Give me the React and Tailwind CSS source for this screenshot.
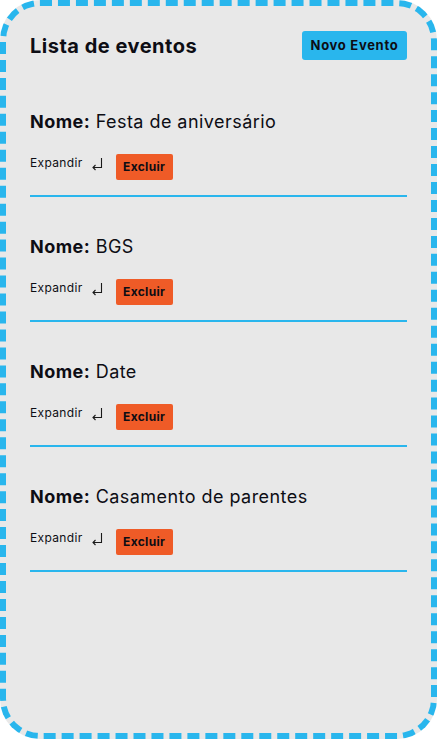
import React from "react";

const events = ["Festa de aniversário", "BGS", "Date", "Casamento de parentes"];

function ReturnArrow() {
  return (
    <svg width="12" height="14" viewBox="0 0 12 14" className="ml-[8px] mt-[3px]" fill="none" stroke="#1a1a1a" strokeWidth="1.1">
      <path d="M10.5 1 V10.5 H2" />
      <path d="M4.5 8 L2 10.5 L4.5 13" />
    </svg>
  );
}

export default function App() {
  return (
    <div className="w-[437px] h-[739px] bg-white" style={{ fontFamily: "Inter, 'Noto Sans', sans-serif" }}>
      <div className="w-full h-full border-[6px] border-dashed border-[#29b6ed] rounded-[40px] bg-[#e8e8e8] px-6 pt-[25px] text-[#0d0d14]">
        <div className="flex items-center justify-between mb-3">
          <h1 className="text-[20px] leading-[28px] font-bold tracking-[0.5px]">Lista de eventos</h1>
          <button className="h-[29px] w-[105px] bg-[#29b6ed] rounded-[3px] text-[13px] font-bold tracking-[0.7px]">Novo Evento</button>
        </div>
        {events.map((name) => (
          <div key={name} className="pt-9">
            <div className="text-[18px] leading-[27px] tracking-[0.45px]">
              <span className="font-bold">Nome:</span> <span>{name}</span>
            </div>
            <div className="flex items-start mt-[19px] mb-[15px]">
              <span className="text-[12px] leading-[18px] tracking-[0.35px]">Expandir</span>
              <ReturnArrow />
              <button className="ml-[13px] h-[26px] w-[57px] bg-[#ef5b27] rounded-[2px] text-[12px] font-bold tracking-[0.3px]">Excluir</button>
            </div>
            <div className="h-[2px] bg-[#29b6ed]" />
          </div>
        ))}
      </div>
    </div>
  );
}
